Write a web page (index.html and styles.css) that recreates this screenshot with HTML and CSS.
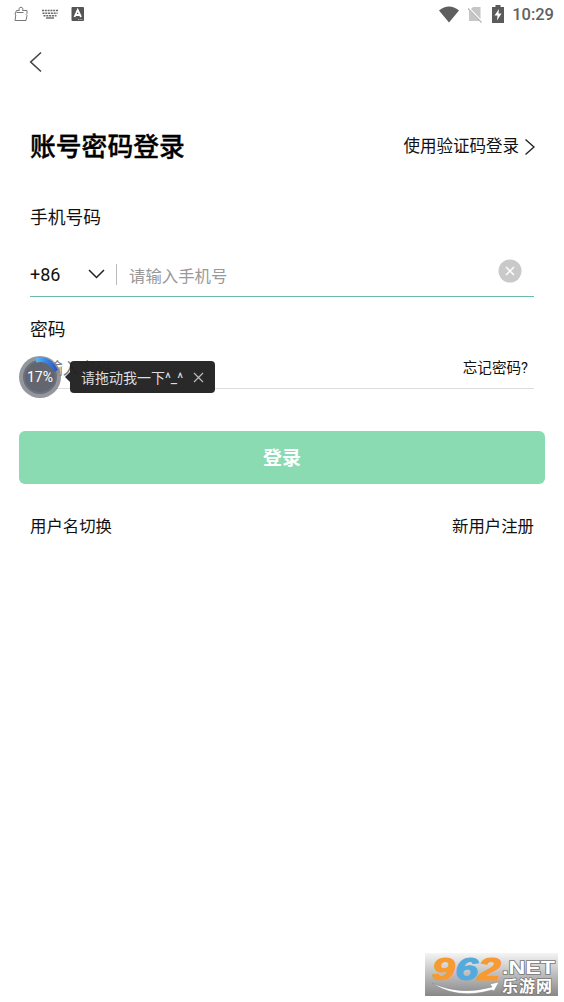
FILE: index.html
```html
<!DOCTYPE html>
<html lang="zh-CN">
<head>
<meta charset="utf-8">
<title>账号密码登录</title>
<link rel="stylesheet" href="styles.css">
</head>
<body>
<div class="screen">
  <header class="status">
    <div class="status-left">
      <svg width="16" height="16" viewBox="0 0 16 16" fill="none" stroke="#777" stroke-width="1"><path d="M3.500 4.500h2.800c-.8-2 0-3.200 1.700-3.200s2.300 1.200 1.500 3.200H14v3l-.8 1 .8 1-1 5H2L2.800 9l-.8-1z"/><path d="M3.500 6.500h7"/></svg>
      <svg width="18" height="16" viewBox="0 0 18 16" stroke="#686868" fill="none"><path d="M1 4.500h16M1.500 7.200h15M2.500 9.800h13" stroke-width="1.600" stroke-dasharray="2 .8"/><path d="M5 12h8" stroke-width="1.400"/></svg>
      <svg width="14" height="16" viewBox="0 0 14 16"><rect x=".5" y="1" width="12.500" height="14" rx="1" fill="#555"/><path d="M3.500 11 6.700 4l3.300 7M4.700 9h4" fill="none" stroke="#fff" stroke-width="1.800"/><path d="M7 13.500h5" stroke="#ccc" stroke-width=".8" stroke-dasharray="1 .7"/></svg>
    </div>
    <div class="status-right">
      <svg width="20" height="17" viewBox="0 0 20 17"><path d="M0 4.500Q10-3.500 20 4.500L10 16.500z" fill="#5e5e5e"/></svg>
      <svg class="sim" width="15" height="17" viewBox="0 0 15 17"><path d="M5 1h7.500v14H1V5z" fill="#c6c6c6"/><path d="M0 1.500 14 16" stroke="#fff" stroke-width="2"/><path d="M0 2.500 13.500 16.500" stroke="#b5b5b5" stroke-width="1.200"/></svg>
      <svg class="battery" width="12" height="18" viewBox="0 0 12 18"><path d="M3.500 0h5v2H12v16H0V2h3.500z" fill="#5b5b5b"/><path d="M7 4 2.500 10.500H5.500L5 15.500l4.500-7H6.500z" fill="#fff"/></svg>
      <span class="clock">10:29</span>
    </div>
  </header>
  <nav class="nav">
    <svg width="14" height="22" viewBox="0 0 14 22"><path d="M12 1.500 1.700 11 12 20.500" fill="none" stroke="#444" stroke-width="1.600"/></svg>
  </nav>
  <main class="form">
    <div class="heading">
      <h1 class="title">账号密码登录</h1>
      <a class="switch">使用验证码登录<svg width="11" height="18" viewBox="0 0 11 18"><path d="M1.500 1.500 10 9l-8.500 7.500" fill="none" stroke="#222" stroke-width="1.400"/></svg></a>
    </div>
    <div class="label phone-label">手机号码</div>
    <div class="field phone">
      <span class="code">+86</span>
      <svg class="down" width="17" height="10" viewBox="0 0 17 10"><path d="M1 1 8.500 8.500 16 1" fill="none" stroke="#222" stroke-width="1.500"/></svg>
      <span class="divider"></span>
      <span class="placeholder">请输入手机号</span>
      <svg class="clear" width="24" height="24" viewBox="0 0 24 24"><circle cx="12" cy="12" r="11.500" fill="#c9c9c9"/><path d="m8 8 8 8m0-8-8 8" stroke="#fff" stroke-width="1.500"/></svg>
    </div>
    <div class="label password-label">密码</div>
    <div class="field password">
      <span class="placeholder dark">请输入密码</span>
      <a class="forgot">忘记密码?</a>
    </div>
    <div class="submit">登录</div>
    <div class="links"><a>用户名切换</a><a>新用户注册</a></div>
  </main>
  <div class="floating">
    <div class="ball">
      <svg class="ring" width="42" height="42" viewBox="0 0 42 42">
        <defs><linearGradient id="arc"><stop stop-color="#63b7ef"/><stop offset=".5" stop-color="#3487ee"/><stop offset="1" stop-color="#3158c0"/></linearGradient></defs>
        <circle cx="21" cy="21" r="21" fill="#85878b" fill-opacity=".88"/><circle cx="21" cy="21" r="16" fill="#5a5e67" fill-opacity=".85" stroke="#697084" stroke-width="2"/>
        <path d="M17 4.500Q30 1 37 15" fill="none" stroke="url(#arc)" stroke-width="4.500"/>
      </svg>
      <span class="percent">17%</span>
    </div>
    <div class="tip"><span>请拖动我一下^_^</span><svg width="11" height="11" viewBox="0 0 11 11"><path d="m1 1 9 9m0-9-9 9" stroke="#bbb" stroke-width="1.200"/></svg></div>
  </div>
  <svg class="watermark" width="133" height="43" viewBox="0 0 133 43">
    <defs><linearGradient id="shade" x2="0" y2="1"><stop stop-color="#f4f4f4"/><stop offset=".5" stop-color="#bdbdbd"/><stop offset="1" stop-color="#888"/></linearGradient></defs>
    <rect width="133" height="43" fill="url(#shade)"/>
    <path d="M7 30Q35 43 67 34l-2-3 9-2-5 9-2-1Q32 47 7 30z" fill="#fff" stroke="#888" stroke-width=".5"/>
    <text class="digits" x="7" y="26.500" textLength="69" lengthAdjust="spacingAndGlyphs"><tspan class="orange">9</tspan><tspan class="blue">6</tspan><tspan class="orange">2</tspan></text>
    <text class="domain" x="77" y="21" textLength="53" lengthAdjust="spacingAndGlyphs">.NET</text>
    <text class="site" x="77" y="39" textLength="50">乐游网</text>
  </svg>
</div>
</body>
</html>
```
FILE: styles.css
```css
* { box-sizing: border-box; }
body { margin: 0; background: #fff; color: #111; font-family: Roboto, "Noto Sans CJK SC", sans-serif; }
.screen { position: relative; width: 564px; height: 1002px; overflow: hidden; }
.status { display: flex; justify-content: space-between; height: 28px; padding: 0 10px 0 13px; }
.status-left { display: flex; align-items: center; gap: 12px; }
.status-right { display: flex; align-items: center; }
.sim { margin-left: 9px; }
.battery { margin-left: 9px; }
.clock { margin-left: 8px; font-size: 16.5px; font-weight: 500; color: #616161; line-height: 28px; padding-top: 1px; }
.nav { height: 68px; padding: 23px 0 0 29px; }
.form { padding: 0 30px; }
.heading { display: flex; justify-content: space-between; align-items: center; height: 100px; padding-top: 2px; }
.title { margin: 0; font-size: 25.8px; line-height: 40px; font-weight: 500; color: #000; -webkit-text-stroke: .35px #000; }
.switch { display: flex; align-items: center; gap: 5px; margin-right: -1px; font-size: 16.5px; line-height: 24px; }
.label { font-size: 17.8px; line-height: 26px; }
.phone-label { padding-top: 9px; height: 56px; }
.field { display: flex; align-items: center; }
.phone { height: 45px; border-bottom: 1px solid #6cb9ad; }
.code { width: 58px; font-size: 18px; }
.divider { width: 1px; height: 21px; margin: 0 12px 0 11px; background: #bbb; }
.placeholder { font-size: 16.4px; color: #999; padding-top: 2px; }
.clear { margin: -7px 12px 0 auto; }
.password-label { padding-top: 20px; height: 51px; }
.password { height: 41px; justify-content: space-between; padding-bottom: 3px; border-bottom: 1px solid #ddd; }
.dark { color: #777; padding-top: 0; }
.forgot { font-size: 14.6px; margin-right: 6px; }
.submit { height: 53px; margin: 42px -11px 0; border-radius: 6px; background: #8adab2; color: #fff; text-align: center; line-height: 55px; font-size: 19px; font-weight: 700; }
.links { display: flex; justify-content: space-between; margin-top: 31px; font-size: 16.4px; line-height: 24px; }
.floating { position: absolute; left: 19px; top: 356px; display: flex; align-items: center; gap: 9px; }
.ball { position: relative; width: 42px; height: 42px; }
.ring { display: block; }
.percent { position: absolute; inset: 0; text-align: center; line-height: 43px; font-size: 14px; color: #fff; }
.tip { position: relative; display: flex; align-items: center; justify-content: space-between; width: 145px; height: 32px; padding: 0 11px; border-radius: 4px; background: rgba(32, 32, 32, .96); color: #ddd; font-size: 14px; }
.tip::before { content: ""; position: absolute; left: -5px; top: 11px; border: 5px solid transparent; border-left: 0; border-right-color: #292929; }
.watermark { position: absolute; left: 425px; top: 953px; }
.digits { font: italic 700 32px "Liberation Sans", sans-serif; stroke-width: 1px; }
.orange { fill: #f79a32; stroke: #f79a32; }
.blue { fill: #55aadd; stroke: #55aadd; }
.domain { font: 700 19px "Liberation Sans", sans-serif; fill: #fff; stroke: #777; stroke-width: 1.5px; paint-order: stroke; }
.site { font: 700 16px "Noto Sans CJK SC", sans-serif; fill: #fff; stroke: #777; stroke-width: 1.5px; paint-order: stroke; }
```
